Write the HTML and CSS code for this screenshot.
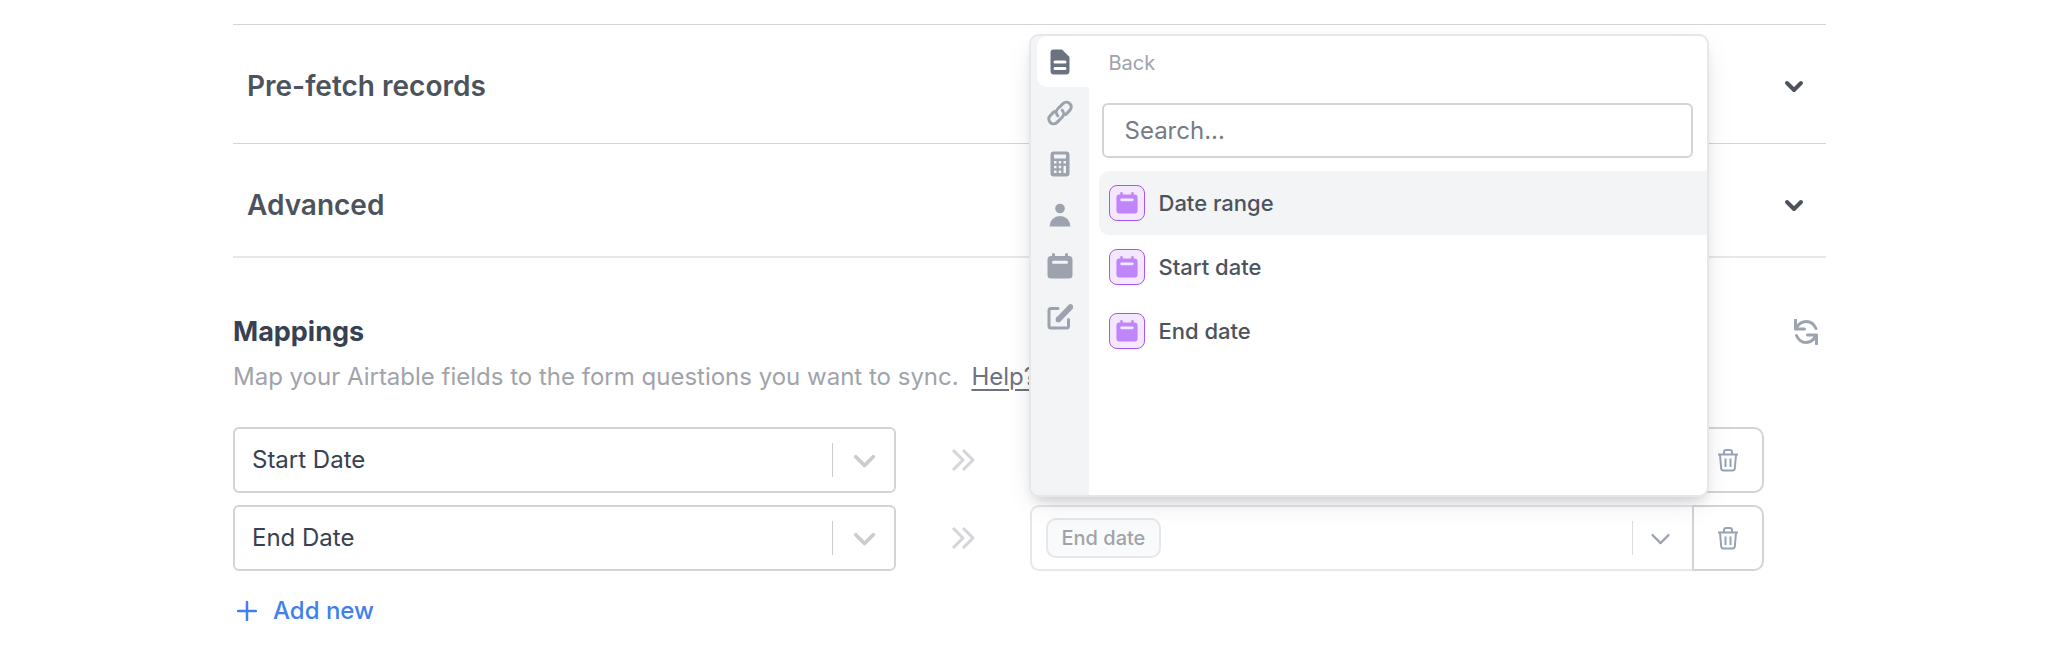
FILE: index.html
```html
<!DOCTYPE html>
<html lang="en">
<head>
<meta charset="utf-8">
<title>Airtable mappings</title>
<meta name="viewport" content="width=device-width, initial-scale=1">
<link rel="stylesheet" href="styles.css">
</head>
<body>
<svg class="sprite" aria-hidden="true">
  <symbol id="chevron" viewBox="0 0 20 20"><path d="M3 7l7 7 7-7" fill="none" stroke="currentColor" stroke-linecap="round" stroke-linejoin="round"/></symbol>
  <symbol id="arrows" viewBox="0 0 24 24"><path d="M2 2l10 10L2 22M12 2l10 10-10 10" fill="none" stroke="currentColor" stroke-width="3" stroke-linejoin="round"/></symbol>
  <symbol id="trash" viewBox="0 0 24 24"><path d="M2 6.500h20M4 7l1.200 13.500q.200 2 2.200 2h9.200q2 0 2.200-2L20 7M8 6V4q0-2 2-2h4q2 0 2 2v2M9.500 10.500v8.500M14.500 10.500v8.500" fill="none" stroke="currentColor" stroke-width="2"/></symbol>
  <symbol id="calendar" viewBox="0 0 26 26"><path fill="currentColor" fill-rule="evenodd" d="M5 1.500a1.500 1.500 0 0 1 3 0V3h10V1.500a1.500 1.500 0 0 1 3 0V3h1a3.500 3.500 0 0 1 3.500 3.500v15.500A3.500 3.500 0 0 1 22 25.500H4A3.500 3.500 0 0 1 .5 22V6.500A3.500 3.500 0 0 1 4 3h1zM6.500 7.800a1.500 1.500 0 0 0 0 3h13a1.500 1.500 0 0 0 0-3z"/></symbol>
</svg>
<main class="page">
  <section class="accordion">
    <button class="accordion-row" type="button" aria-expanded="false">Pre-fetch records<svg class="icon-chevron"><use href="#chevron"/></svg></button>
    <button class="accordion-row accordion-row-last" type="button" aria-expanded="false">Advanced<svg class="icon-chevron"><use href="#chevron"/></svg></button>
  </section>

  <section class="mappings">
    <header class="mappings-head">
      <h2 class="title">Mappings</h2>
      <button class="refresh" type="button" aria-label="Refresh fields">
        <svg viewBox="0 0 26 26" class="icon-refresh"><path d="M2.500 1v9h9M3 9.500C5.500 4.500 9 2.500 13.500 2.500c4.500 0 7.500 2.500 9.500 7M23.500 25v-9h-9M23 16.500c-2.500 5-6 7-10 7-4.500 0-7.500-2.500-9.500-7" fill="none" stroke="currentColor" stroke-width="3" stroke-linecap="round" stroke-linejoin="round"/></svg>
      </button>
    </header>
    <p class="description">Map your Airtable fields to the form questions you want to sync. <a class="help" href="#help">Help?</a></p>

    <div class="rows">
      <div class="row">
        <div class="select">
          <select class="select-field" aria-label="Airtable field 1"><option>Start Date</option><option>End Date</option></select>
          <span class="indicator"><svg class="icon-select"><use href="#chevron"/></svg></span>
        </div>
        <svg class="icon-arrows"><use href="#arrows"/></svg>
        <div class="target">
          <button class="target-field" type="button" aria-label="Form question 1"><span class="indicator"><svg class="icon-thin"><use href="#chevron"/></svg></span></button>
        </div>
        <button class="delete" type="button" aria-label="Delete mapping 1"><svg class="icon-trash"><use href="#trash"/></svg></button>
      </div>
      <div class="row">
        <div class="select">
          <select class="select-field" aria-label="Airtable field 2"><option>End Date</option><option>Start Date</option></select>
          <span class="indicator"><svg class="icon-select"><use href="#chevron"/></svg></span>
        </div>
        <svg class="icon-arrows"><use href="#arrows"/></svg>
        <div class="target">
          <button class="target-field" type="button" aria-expanded="true"><span class="chip">End date</span><span class="indicator"><svg class="icon-thin"><use href="#chevron"/></svg></span></button>
          <div class="picker">
            <nav class="tabs" aria-label="Value types">
              <button class="tab tab-active" type="button" aria-label="Form"><svg class="icon-tab" viewBox="0 0 26 26"><path fill="currentColor" fill-rule="evenodd" d="M6.500.5h8.500L22.500 8v14a3.500 3.500 0 0 1-3.500 3.500H7A3.500 3.500 0 0 1 3.500 22V3.500a3 3 0 0 1 3-3zM8 11.500a1.500 1.500 0 0 0 0 3h10a1.500 1.500 0 0 0 0-3zM8 18a1.500 1.500 0 0 0 0 3h10a1.500 1.500 0 0 0 0-3z"/></svg></button>
              <button class="tab" type="button" aria-label="URL parameters"><svg class="icon-tab" viewBox="0 0 26 26"><path d="M10.800 15.800a5 5 0 0 1 0-7L16 3.600a4.700 4.700 0 0 1 6.800 6.800l-4 4M15.200 10.200a5 5 0 0 1 0 7L10 22.400a4.700 4.700 0 0 1-6.800-6.800l4-4" fill="none" stroke="currentColor" stroke-width="3" stroke-linecap="round"/></svg></button>
              <button class="tab" type="button" aria-label="Calculations"><svg class="icon-tab" viewBox="0 0 26 26"><path fill="currentColor" fill-rule="evenodd" d="M6.500.5h13a3 3 0 0 1 3 3v19a3 3 0 0 1-3 3h-13a3 3 0 0 1-3-3v-19a3 3 0 0 1 3-3zM7 3.500v4h12v-4zM7 10v2.500h2.500V10zM11.700 10v2.500h2.500V10zM16.500 10v2.500H19V10zM7 14.700v2.500h2.500v-2.500zM11.700 14.700v2.500h2.500v-2.500zM7 19.500V22h2.500v-2.500zM11.700 19.500V22h2.500v-2.500zM16.500 14.700V22H19v-7.300z"/></svg></button>
              <button class="tab" type="button" aria-label="User"><svg class="icon-tab" viewBox="0 0 26 26"><circle cx="13" cy="6.500" r="4.800" fill="currentColor"/><path d="M2.500 24.500a10.500 10.500 0 0 1 21 0z" fill="currentColor"/></svg></button>
              <button class="tab" type="button" aria-label="Dates"><svg class="icon-tab"><use href="#calendar"/></svg></button>
              <button class="tab" type="button" aria-label="Custom value"><svg class="icon-tab" viewBox="0 0 26 26"><path d="M11 4.500H4A2 2 0 0 0 2 6.500V22a2 2 0 0 0 2 2h15.500a2 2 0 0 0 2-2v-6.500" fill="none" stroke="currentColor" stroke-width="3" stroke-linecap="round"/><path d="M11.500 15.500L23.500 3" fill="none" stroke="currentColor" stroke-width="5.500" stroke-linecap="round"/><path d="M9.300 12.500L8.800 18l5.500-.8z" fill="currentColor"/></svg></button>
            </nav>
            <div class="panel">
              <button class="back" type="button">Back</button>
              <input class="search" type="text" placeholder="Search..." aria-label="Search">
              <ul class="options">
                <li><button class="option option-active" type="button"><span class="badge"><svg class="icon-option"><use href="#calendar"/></svg></span>Date range</button></li>
                <li><button class="option" type="button"><span class="badge"><svg class="icon-option"><use href="#calendar"/></svg></span>Start date</button></li>
                <li><button class="option" type="button"><span class="badge"><svg class="icon-option"><use href="#calendar"/></svg></span>End date</button></li>
              </ul>
            </div>
          </div>
        </div>
        <button class="delete" type="button" aria-label="Delete mapping 2"><svg class="icon-trash"><use href="#trash"/></svg></button>
      </div>
    </div>

    <button class="add" type="button"><svg class="icon-plus" viewBox="0 0 20 20"><path d="M10 1v18M1 10h18" fill="none" stroke="currentColor" stroke-width="2.500" stroke-linecap="round"/></svg>Add new</button>
  </section>
</main>
</body>
</html>
```
FILE: styles.css
```css
* { box-sizing: border-box; }

body {
  margin: 0;
  background: #fff;
  color: #374151;
  font-family: Inter, "Liberation Sans", sans-serif;
  font-size: 24px;
  line-height: 32px;
}

button, select, input {
  margin: 0;
  padding: 0;
  border: 0;
  background: none;
  color: inherit;
  font: inherit;
  text-align: left;
}

svg { display: block; flex: none; }

.sprite { position: absolute; width: 0; height: 0; }

.page { padding: 24px 233px 20px; }

.accordion { border-bottom: 2px solid #e6e7e9; }

.accordion-row {
  display: flex;
  align-items: center;
  justify-content: space-between;
  width: 100%;
  padding: 44px 22px 40px 14px;
  border-top: 1px solid #d3d4d6;
  color: #4d535d;
  font-size: 28px;
  font-weight: 600;
  line-height: 34px;
}

.accordion-row-last { padding-bottom: 34px; }

.icon-chevron { width: 20px; height: 20px; stroke-width: 4; }

.mappings { padding-top: 57px; }

.mappings-head {
  display: flex;
  align-items: center;
  justify-content: space-between;
  padding-right: 7px;
}

.title {
  margin: 0;
  font-size: 27px;
  font-weight: 700;
  line-height: 34px;
}

.refresh { color: #9ca3af; }

.icon-refresh { width: 26px; height: 26px; }

.description { margin: 12px 0 34px; color: #9fa3aa; }

.help { margin-left: 6px; color: #6b7280; text-underline-offset: 4px; }

.rows { display: grid; gap: 12px; padding-right: 62px; }

.row {
  display: grid;
  grid-template-columns: minmax(0, 1fr) 134px minmax(0, 1fr) 72px;
  align-items: stretch;
  min-height: 66px;
}

.select { display: grid; }

.select > * { grid-area: 1 / 1; }

.select-field {
  width: 100%;
  padding: 0 80px 0 17px;
  border: 2px solid #d2d4d7;
  border-radius: 6px;
  appearance: none;
}

.indicator {
  display: flex;
  align-items: center;
  justify-content: center;
  align-self: center;
  justify-self: end;
  width: 64px;
  height: 34px;
  border-left: 1px solid #ccc;
  color: #ccc;
  pointer-events: none;
}

.icon-select { width: 25px; height: 25px; stroke-width: 3; }

.icon-thin { width: 23px; height: 23px; stroke-width: 2; color: #9ca3af; }

.icon-arrows {
  align-self: center;
  justify-self: center;
  width: 24px;
  height: 24px;
  color: #d3d5d8;
}

.target { position: relative; display: grid; }

.target-field {
  display: flex;
  align-items: center;
  width: 100%;
  padding-left: 14px;
  border: 2px solid #e5e7eb;
  border-right: 0;
  border-radius: 9px 0 0 9px;
}

.target-field .indicator {
  width: 60px;
  margin-left: auto;
  padding-right: 4px;
  border-color: #ddd;
}

.chip {
  padding: 3px 14px;
  border: 2px solid #e5e7eb;
  border-radius: 10px;
  background: #f9fafb;
  color: #9fa3aa;
  font-size: 20px;
  font-weight: 500;
  line-height: 30px;
}

.delete {
  display: flex;
  align-items: center;
  justify-content: center;
  border: 2px solid #d2d4d7;
  border-radius: 0 10px 10px 0;
  color: #94a3b8;
}

.icon-trash { width: 24px; height: 24px; }

.add {
  display: flex;
  align-items: center;
  gap: 16px;
  margin-top: 24px;
  padding-left: 4px;
  color: #3f80ee;
  font-weight: 500;
}

.icon-plus { width: 20px; height: 20px; }

.picker {
  position: absolute;
  z-index: 1;
  left: -1px;
  bottom: calc(100% + 8px);
  display: flex;
  width: calc(100% + 18px);
  min-height: 463px;
  overflow: hidden;
  border: 2px solid #e5e7eb;
  border-radius: 10px;
  background: #fff;
  box-shadow: 0 10px 30px -6px rgb(0 0 0 / 12%), 0 8px 12px -5px rgb(0 0 0 / 14%);
}

.tabs {
  display: flex;
  flex: none;
  flex-direction: column;
  width: 58px;
  padding-left: 6px;
  background: #f3f4f6;
}

.tab {
  display: flex;
  align-items: center;
  justify-content: center;
  height: 51px;
  padding-right: 6px;
  border-radius: 10px 0 0 10px;
  color: #9ca3af;
}

.tab-active { background: #fff; color: #6b7280; }

.icon-tab { width: 26px; height: 26px; }

.panel { flex: 1; min-width: 0; padding-top: 11px; }

.back {
  display: block;
  padding-left: 20px;
  color: #9fa3aa;
  font-size: 20px;
  line-height: 32px;
}

.search {
  display: block;
  width: calc(100% - 27px);
  height: 55px;
  margin: 24px 14px 13px 13px;
  padding: 0 21px;
  border: 2px solid #d2d4d7;
  border-radius: 6px;
}

.search::placeholder { color: #757b86; opacity: 1; }

.options { margin: 0 0 0 10px; padding: 0; list-style: none; }

.option {
  display: flex;
  align-items: center;
  gap: 14px;
  width: 100%;
  height: 64px;
  padding-left: 10px;
  border-radius: 10px 0 0 10px;
  color: #4d535d;
  font-size: 22px;
  font-weight: 500;
}

.option-active { background: #f3f4f6; }

.badge {
  display: flex;
  align-items: center;
  justify-content: center;
  width: 36px;
  height: 36px;
  border: 1px solid #a855f7;
  border-radius: 8px;
  background: #f3e8ff;
  color: #c084fc;
}

.icon-option { width: 22px; height: 22px; }
```
